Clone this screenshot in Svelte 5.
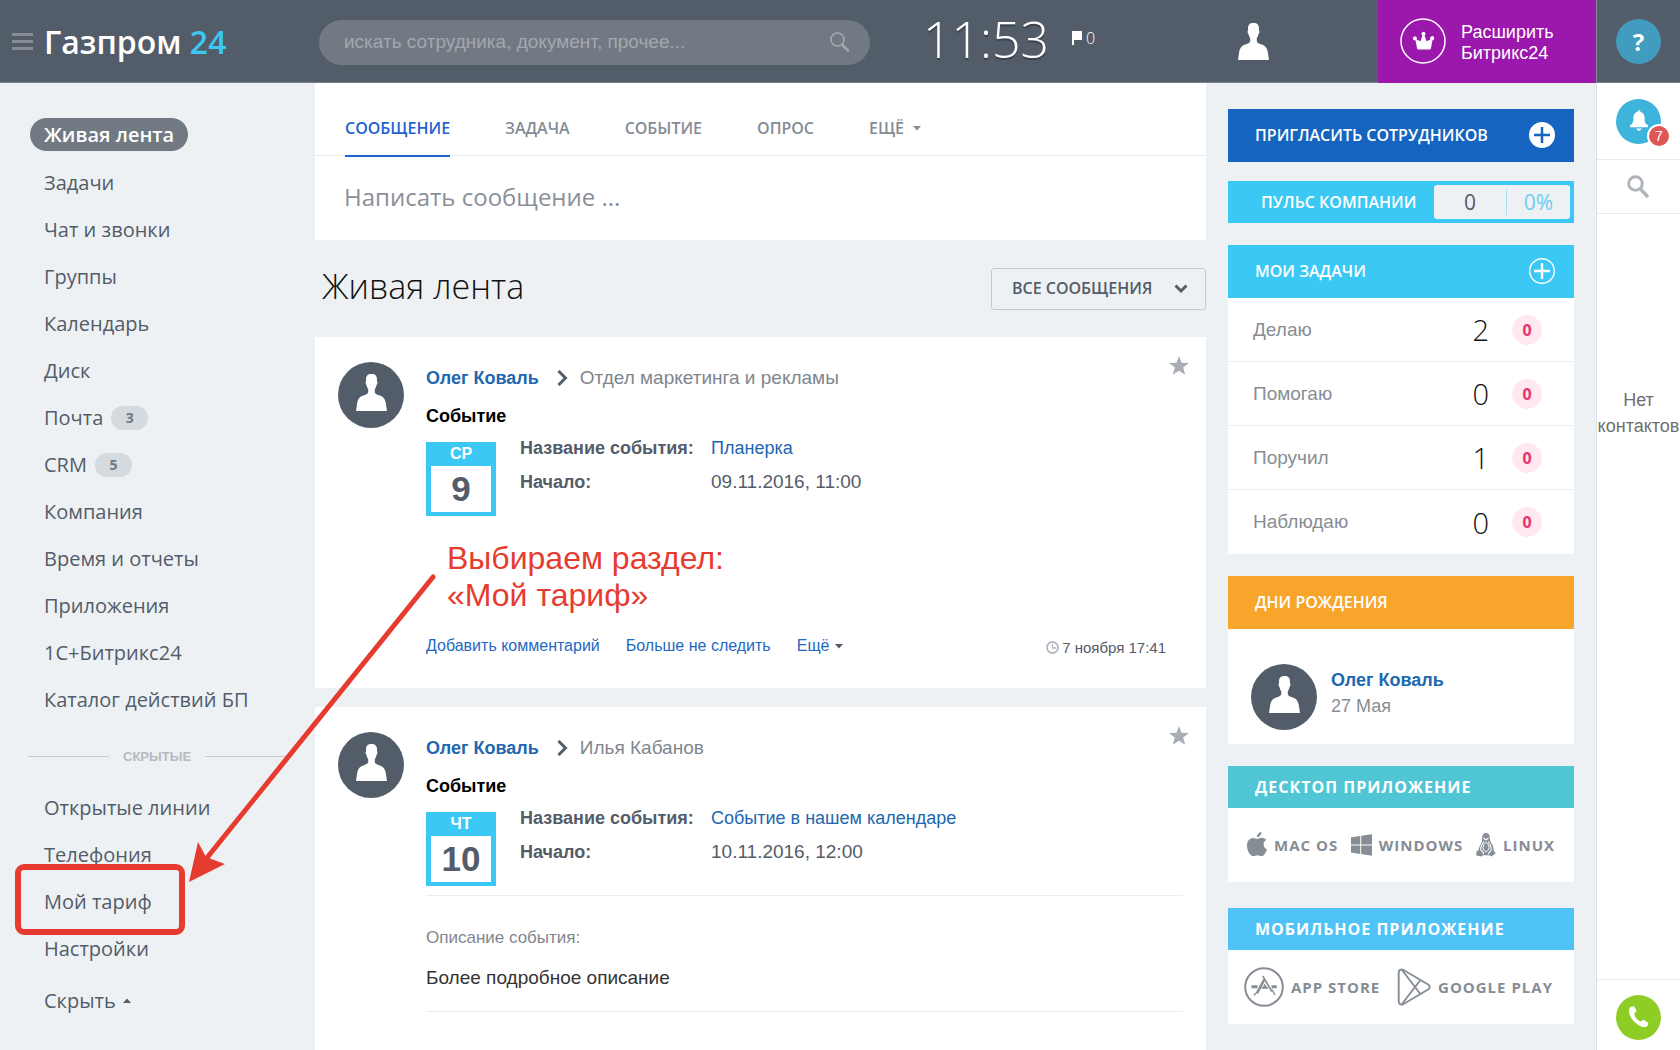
<script>
    let query = ''
    let message = ''
    let filter = 'all'

    const menu = [
        { title: 'Живая лента', active: true },
        { title: 'Задачи' },
        { title: 'Чат и звонки' },
        { title: 'Группы' },
        { title: 'Календарь' },
        { title: 'Диск' },
        { title: 'Почта', count: 3 },
        { title: 'CRM', count: 5 },
        { title: 'Компания' },
        { title: 'Время и отчеты' },
        { title: 'Приложения' },
        { title: '1С+Битрикс24' },
        { title: 'Каталог действий БП' }
    ]

    const hiddenMenu = ['Открытые линии', 'Телефония', 'Мой тариф', 'Настройки']

    const tabs = ['Сообщение', 'Задача', 'Событие', 'Опрос']

    const posts = [
        {
            author: 'Олег Коваль',
            target: 'Отдел маркетинга и рекламы',
            weekday: 'СР',
            day: 9,
            name: 'Планерка',
            start: '09.11.2016, 11:00',
            time: '7 ноября 17:41'
        },
        {
            author: 'Олег Коваль',
            target: 'Илья Кабанов',
            weekday: 'ЧТ',
            day: 10,
            name: 'Событие в нашем календаре',
            start: '10.11.2016, 12:00',
            desc: 'Более подробное описание'
        }
    ]

    const tasks = [
        { title: 'Делаю', total: 2, late: 0 },
        { title: 'Помогаю', total: 0, late: 0 },
        { title: 'Поручил', total: 1, late: 0 },
        { title: 'Наблюдаю', total: 0, late: 0 }
    ]
</script>

{#snippet person()}
    <svg class="person" width="31" height="37" viewBox="0 0 32 38" aria-hidden="true">
        <path fill="#fff" d="M16 0c-4 0-6 2-5.600 6.500.100 1-.700 1.200-.500 2.800.200 1.500.800 2 1.100 2.400.300 2 1 3 1.600 3.700v3c0 1.600-1.700 2.400-5 3.600C3.200 23.600 2 26 1.200 30L0 38h32l-1.200-8c-.800-4-2-6.400-6.400-8-3.300-1.200-5-2-5-3.600v-3c.600-.700 1.300-1.700 1.600-3.700.300-.400.900-.900 1.100-2.400.200-1.600-.600-1.800-.500-2.800C22 2 20 0 16 0z"/>
    </svg>
{/snippet}

{#snippet caret()}
    <svg class="caret" width="8" height="5" viewBox="0 0 8 5" aria-hidden="true"><path fill="currentColor" d="M0 0h8L4 4.500z"/></svg>
{/snippet}

<div class="page">
    <header class="top">
        <div class="brand">
            <button class="burger" aria-label="Меню"><span></span><span></span><span></span></button>
            <a href="#home" class="logo">Газпром <b>24</b></a>
        </div>
        <div class="search">
            <input type="text" bind:value={query} aria-label="Поиск" placeholder="искать сотрудника, документ, прочее...">
            <button aria-label="Найти">
                <svg width="20" height="20" viewBox="0 0 20 20" fill="none" stroke="#a3a8af">
                    <circle cx="7.500" cy="7.500" r="6.500" stroke-width="1.600"/>
                    <path d="M12.500 13l5.500 5.500" stroke-width="2.600" stroke-linecap="round"/>
                </svg>
            </button>
        </div>
        <time class="clock">11:53</time>
        <div class="flag">
            <svg width="10" height="14" viewBox="0 0 10 14"><path fill="#fff" d="M0 0h10v9H2v5H0z"/></svg>
            <span>0</span>
        </div>
        <button class="user" aria-label="Профиль">{@render person()}</button>
        <a href="#upgrade" class="upgrade">
            <svg width="46" height="46" viewBox="0 0 46 46" fill="none">
                <circle cx="23" cy="23" r="22" stroke="#fff" stroke-width="1.500"/>
                <path fill="#fff" d="M17 30 15.500 22.200a2 2 0 1 1 1.300-2.400q.200.900-.300 1.600l4 1.800 1.900-5.600a2 2 0 1 1 2.200 0l1.900 5.600 4-1.800a2 2 0 1 1 2 .800L31 30q-.200 1.500-1.500 1.500h-11q-1.300 0-1.500-1.500z"/>
            </svg>
            <span>Расширить<br>Битрикс24</span>
        </a>
        <div class="help"><button>?</button></div>
    </header>

    <div class="body">
        <nav class="menu">
            <ul class="main-menu">
                {#each menu as item}
                    <li>
                        <a href="#menu" class:active={item.active}>{item.title}</a>
                        {#if item.count}<span class="count">{item.count}</span>{/if}
                    </li>
                {/each}
            </ul>
            <div class="divider"><span>СКРЫТЫЕ</span></div>
            <ul>
                {#each hiddenMenu as title}
                    <li><a href="#menu">{title}</a></li>
                {/each}
            </ul>
            <button class="hide">Скрыть <i>{@render caret()}</i></button>
        </nav>

        <main>
            <section class="composer">
                <div class="tabs">
                    {#each tabs as tab, i}
                        <button class:current={i === 0}>{tab}</button>
                    {/each}
                    <button>Ещё {@render caret()}</button>
                </div>
                <input type="text" bind:value={message} aria-label="Сообщение" placeholder="Написать сообщение ...">
            </section>

            <div class="feed-head">
                <h1>Живая лента</h1>
                <div class="filter">
                    <select bind:value={filter} aria-label="Фильтр ленты">
                        <option value="all">ВСЕ СООБЩЕНИЯ</option>
                    </select>
                    <svg width="14" height="10" viewBox="0 0 14 10" fill="none"><path d="M1.500 1.500 7 7l5.500-5.500" stroke="#535c69" stroke-width="3"/></svg>
                </div>
            </div>

            {#each posts as post}
                <article class="post">
                    <div class="avatar">{@render person()}</div>
                    <div class="post-body">
                        <div class="post-head">
                            <a href="#user">{post.author}</a>
                            <svg width="11" height="16" viewBox="0 0 11 16" fill="none"><path d="M1.500 1 8.500 8l-7 7" stroke="#535c69" stroke-width="3"/></svg>
                            <span>{post.target}</span>
                        </div>
                        <h2>Событие</h2>
                        <div class="event">
                            <div class="date">
                                <span>{post.weekday}</span>
                                <b>{post.day}</b>
                            </div>
                            <dl>
                                <dt>Название события:</dt>
                                <dd><a href="#event">{post.name}</a></dd>
                                <dt>Начало:</dt>
                                <dd>{post.start}</dd>
                            </dl>
                        </div>
                        {#if post.desc}
                            <div class="desc">
                                <h3>Описание события:</h3>
                                <p>{post.desc}</p>
                            </div>
                        {/if}
                        {#if post.time}
                            <footer>
                                <button>Добавить комментарий</button>
                                <button>Больше не следить</button>
                                <button>Ещё {@render caret()}</button>
                                <time>
                                    <svg width="13" height="13" viewBox="0 0 13 13" fill="none" stroke="#b3b8c0"><circle cx="6.500" cy="6.500" r="5.500" stroke-width="1.800"/><path d="M6.500 3v4H10" stroke-width="1.300"/></svg>
                                    {post.time}
                                </time>
                            </footer>
                        {/if}
                    </div>
                    <button class="star" aria-label="В избранное">
                        <svg width="20" height="19" viewBox="0 0 20 19"><path fill="#a9adb4" d="M10 0l2.600 6.700 7.400.300-5.800 4.500 2 7.300L10 14.700l-6.200 4.100 2-7.300L0 7l7.400-.300z"/></svg>
                    </button>
                </article>
            {/each}
        </main>

        <aside class="widgets">
            <button class="bar invite">
                Пригласить сотрудников
                <svg width="26" height="26" viewBox="0 0 26 26"><circle cx="13" cy="13" r="13" fill="#fff"/><path d="M13 5v16M5 13h16" stroke="#1565c0" stroke-width="2.500"/></svg>
            </button>

            <section class="pulse">
                <h4>Пульс компании</h4>
                <div><span>0</span><span>0%</span></div>
            </section>

            <section class="card tasks">
                <header class="bar">
                    Мои задачи
                    <button aria-label="Добавить задачу">
                        <svg width="26" height="26" viewBox="0 0 26 26" fill="none" stroke="#fff"><circle cx="13" cy="13" r="12.300" stroke-width="1.400"/><path d="M13 5v16M5 13h16" stroke-width="2.400"/></svg>
                    </button>
                </header>
                <ul>
                    {#each tasks as task}
                        <li><a href="#tasks">{task.title}</a><b>{task.total}</b><span>{task.late}</span></li>
                    {/each}
                </ul>
            </section>

            <section class="card birthdays">
                <header class="bar">Дни рождения</header>
                <div class="birthday">
                    <div class="avatar">{@render person()}</div>
                    <p><a href="#user">Олег Коваль</a><br>27 Мая</p>
                </div>
            </section>

            <section class="card apps desktop">
                <header class="bar">Десктоп приложение</header>
                <div class="links">
                    <a href="#mac">
                        <svg width="20" height="26" viewBox="0 0 20 26"><path fill="#868d95" d="M14.500 0c.200 2.600-2 5.200-4.600 5.300C9.600 2.900 12 .300 14.500 0zM10.200 7c1 0 2.400-1.400 4.800-1.200 1.800.100 3.300.900 4.200 2.200-3.900 2.500-3.200 7.700.800 9.200-1.200 3.500-3.200 7-5.500 7-1.500 0-2.200-.900-4-.900s-2.500.900-4 .9C3.300 24.300 0 19 0 13.700 0 8.800 2.900 6 6 6c1.900 0 3.100 1 4.200 1z"/></svg>
                        MAC OS
                    </a>
                    <a href="#windows">
                        <svg width="21" height="22" viewBox="0 0 21 22"><path fill="#868d95" d="M0 3.200 9.200 2v8.400H0zM10.200 1.800 21 .200v10.200H10.200zM0 11.500h9.200v8.400L0 18.600zM10.200 11.500H21v10.200l-10.800-1.600z"/></svg>
                        WINDOWS
                    </a>
                    <a href="#linux">
                        <svg width="20" height="24" viewBox="0 0 20 24">
                            <path fill="#868d95" d="M10 0c2.600 0 3.800 1.800 3.800 4.500 0 2.500.500 3.700 2 6.200 1.400 2.300 2.200 4.600 1.700 6.800l2.300 2.800-4.300 3.200-2.300-1.300H6.800l-1.500 1.300L.300 22.500l.200-4.200 2-1c0-3 2.700-6.300 3.300-8.600.400-1.500.400-2.700.400-4.200C6.200 1.800 7.400 0 10 0z"/>
                            <path fill="none" stroke="#fff" stroke-width="1.100" d="M7.500 5 10 7l2.500-2M7.800 8.500c-2.200 3.200-3.500 5.700-3 8.200L8 20.800M12.200 8.500c2.200 3.200 3.500 5.700 3 8.200L12.300 21"/>
                            <path fill="none" stroke="#fff" stroke-width="1" d="M10 9c2 2 3 3.700 3 5.500s-1.500 3.500-3 4.500c-1.500-1-3-2.700-3-4.500S8 11 10 9z"/>
                        </svg>
                        LINUX
                    </a>
                </div>
            </section>

            <section class="card apps mobile">
                <header class="bar">Мобильное приложение</header>
                <div class="links">
                    <a href="#appstore">
                        <svg width="40" height="40" viewBox="0 0 40 40" fill="none" stroke="#868d95">
                            <circle cx="20" cy="20" r="18.800" stroke-width="2"/>
                            <path d="M7.500 19.800h6M27.500 19.800h5.300" stroke-width="3"/>
                            <path d="M20.300 12.500 12.800 26.500" stroke-width="2.600"/>
                            <path d="M18.800 9l9 15.500" stroke-width="1.600"/>
                            <path d="M28 22.500l3 5.500M11.500 26l-1.200 2.500M17.500 21h6.500" stroke-width="1.500"/>
                            <path fill="#868d95" stroke="none" d="M20.500 16.500 23.500 21h-5z"/>
                        </svg>
                        APP STORE
                    </a>
                    <a href="#googleplay">
                        <svg width="34" height="38" viewBox="0 0 34 38" fill="none" stroke="#868d95" stroke-width="1.900" stroke-linejoin="round">
                            <path d="M6.500 2 31.500 16.800q2.500 2.200 0 4.400L6.500 36q-4.800 1.800-4.800-3V5q0-4.800 4.800-3z"/>
                            <path d="M5 2 23 25.500M23 12.500 5 36"/>
                        </svg>
                        GOOGLE PLAY
                    </a>
                </div>
            </section>
        </aside>

        <aside class="rail">
            <div class="notify">
                <button aria-label="Уведомления">
                    <svg width="18" height="22" viewBox="0 0 20 24"><path fill="#fff" d="M10 0c.900 0 1.500.600 1.500 1.600 3 .700 4.700 3.200 4.700 6.400 0 5 .600 6.500 2.800 8 .700.500 1 1 1 1.500v1.500H0v-1.500c0-.500.300-1 1-1.500 2.200-1.500 2.800-3 2.800-8 0-3.200 1.700-5.700 4.700-6.400C8.500.600 9.100 0 10 0zM7.200 20.300h5.600c-.300 1.600-1.400 2.400-2.800 2.400s-2.500-.800-2.800-2.400z"/></svg>
                    <span>7</span>
                </button>
            </div>
            <button class="find" aria-label="Поиск контакта">
                <svg width="23" height="24" viewBox="0 0 23 24" fill="none" stroke="#b0b5bb"><circle cx="8.500" cy="8.500" r="6.800" stroke-width="3"/><path d="M13.500 14l7.500 8" stroke-width="3.400"/></svg>
            </button>
            <p>Нет контактов</p>
            <div class="call">
                <button aria-label="Позвонить">
                    <svg width="20" height="22" viewBox="0 0 20 22"><path fill="#fff" d="M2.200.800 4 .200q1-.300 1.500.600l1.700 3.400q.400 1-.300 1.700L5.300 7.500c.500 3.800 2.800 6.600 6.500 8l2-1.300q.900-.600 1.700.100l3.400 2.400q.800.700.300 1.600l-1 1.700c-1.500 1.800-5.500 1.300-9.200-1.200C3.500 15.200.500 10.200 0 5.500-.100 3.200.500 1.500 2.200.800z"/></svg>
                </button>
            </div>
        </aside>
    </div>

    <div class="hint">
        <svg width="250" height="314" viewBox="0 0 250 314">
            <path d="M246 8 19 290" stroke="#e63c30" stroke-width="5" stroke-linecap="round"/>
            <path fill="#e63c30" d="M2 313 11 273l8 15 19 7z"/>
        </svg>
        <p>Выбираем раздел:<br>«Мой тариф»</p>
        <div class="frame"></div>
    </div>
</div>

<style>
    :global(body) {
        margin: 0;
    }

    .page {
        position: relative;
        display: flex;
        flex-direction: column;
        min-height: 100vh;
        overflow: hidden;
        background: #edf1f4;
        color: #535c69;
        font-family: 'Liberation Sans', Arial, sans-serif;
        font-size: 18px;
    }

    .page *,
    .page {
        box-sizing: border-box;
    }

    button,
    input,
    select {
        border: none;
        background: none;
        padding: 0;
        font: inherit;
        color: inherit;
    }

    button {
        cursor: pointer;
    }

    a {
        color: #2067b0;
        text-decoration: none;
    }

    ul {
        list-style: none;
        margin: 0;
        padding: 0;
    }

    svg {
        display: block;
        flex: none;
    }

    .top {
        display: flex;
        align-items: center;
        height: 83px;
        background: #535c69;
        border-bottom: 1px solid #7b838e;
        color: #fff;
    }

    .brand {
        display: flex;
        align-items: center;
        gap: 11px;
        width: 319px;
        padding-left: 12px;
    }

    .burger {
        display: grid;
        gap: 4px;
    }

    .burger span {
        width: 21px;
        height: 3px;
        background: #868d96;
    }

    .logo {
        color: #fff;
        font: 600 32px 'Open Sans', sans-serif;
    }

    .logo b {
        font-weight: 600;
        color: #3bc8f5;
    }

    .search {
        display: flex;
        align-items: center;
        width: 551px;
        height: 45px;
        margin-top: 2px;
        padding: 0 20px 0 25px;
        border-radius: 23px;
        background: #717983;
        font-size: 19px;
    }

    .search input {
        flex: 1;
        outline: none;
    }

    .search input::placeholder {
        color: #a3a8af;
        opacity: 1;
    }

    .clock {
        margin-left: 53px;
        padding-bottom: 4px;
        font: 300 50px/78px 'Open Sans', sans-serif;
        text-shadow: 0 2px 1px rgba(0, 0, 0, 0.3);
    }

    .flag {
        display: flex;
        align-items: center;
        gap: 4px;
        margin-left: 23px;
        padding-bottom: 7px;
        font: 300 16px/20px 'Open Sans', sans-serif;
    }

    .user {
        margin: 0 109px 0 auto;
    }

    .upgrade {
        display: flex;
        align-items: center;
        gap: 15px;
        width: 218px;
        height: 83px;
        padding-left: 22px;
        background: #9c17ac;
        color: #fff;
        line-height: 21px;
    }

    .upgrade span {
        padding-top: 3px;
    }

    .help {
        display: grid;
        place-items: center;
        width: 84px;
        height: 83px;
        border-left: 1px solid #868d96;
    }

    .help button,
    .notify button,
    .call button {
        display: grid;
        place-items: center;
        width: 45px;
        height: 45px;
        border-radius: 50%;
        background: #429cbf;
        font: 700 24px 'Open Sans', sans-serif;
    }

    .body {
        display: flex;
        flex: 1;
    }

    .menu {
        width: 315px;
        padding: 28px 28px 0;
        font: 20px/33px 'Open Sans', sans-serif;
    }

    .menu li {
        display: flex;
        align-items: center;
        height: 47px;
        padding-left: 2px;
    }

    .main-menu li:first-child {
        margin-bottom: 1px;
    }

    .menu a {
        padding: 0 14px;
        border-radius: 17px;
        color: #535c69;
    }

    .menu a.active {
        background: #717983;
        color: #fff;
        font-weight: 600;
    }

    .count {
        width: 37px;
        margin-left: -6px;
        border-radius: 12px;
        background: #d5dade;
        font-size: 14px;
        font-weight: 700;
        line-height: 24px;
        text-align: center;
        color: #717983;
    }

    .divider {
        display: flex;
        align-items: center;
        gap: 14px;
        height: 61px;
        padding-top: 6px;
        color: #b5babf;
        font: 700 13px 'Liberation Sans', Arial, sans-serif;
    }

    .divider::before,
    .divider::after {
        content: '';
        width: 81px;
        height: 1px;
        background: #c5cbd0;
    }

    .hide {
        display: flex;
        align-items: center;
        gap: 7px;
        margin: 12px 0 0 16px;
    }

    .hide i {
        transform: rotate(180deg);
    }

    main {
        display: flex;
        flex: 1;
        flex-direction: column;
        min-width: 0;
    }

    .composer {
        background: #fff;
    }

    .tabs {
        display: flex;
        gap: 55px;
        height: 73px;
        padding: 0 30px;
        border-bottom: 1px solid #ebedee;
    }

    .tabs button {
        display: flex;
        align-items: center;
        gap: 9px;
        height: 74px;
        padding-top: 18px;
        border-bottom: 2px solid transparent;
        font: 600 16px 'Open Sans', sans-serif;
        text-transform: uppercase;
        color: #848c95;
    }

    .tabs button.current {
        border-color: #1f62d0;
        color: #1f62d0;
    }

    .composer input {
        width: 100%;
        height: 84px;
        padding: 0 29px 4px;
        outline: none;
        font: 24px 'Open Sans', sans-serif;
    }

    .composer input::placeholder {
        color: #8a9099;
        opacity: 1;
    }

    .feed-head {
        display: flex;
        align-items: center;
        justify-content: space-between;
        height: 97px;
        padding-left: 7px;
    }

    h1 {
        margin: 0;
        padding-bottom: 6px;
        font: 300 34px 'Open Sans', sans-serif;
        color: #111;
    }

    .filter {
        position: relative;
    }

    .filter select {
        appearance: none;
        width: 215px;
        height: 42px;
        padding: 0 20px 2px;
        border: 1px solid #c5cacf;
        border-radius: 3px;
        font: 600 16px 'Open Sans', sans-serif;
        color: #535c69;
    }

    .filter svg {
        position: absolute;
        top: 16px;
        right: 18px;
        pointer-events: none;
    }

    .post {
        position: relative;
        display: flex;
        gap: 22px;
        padding: 25px 23px 32px;
        background: #fff;
    }

    .post + .post {
        flex: 1;
        margin-top: 19px;
    }

    .avatar {
        display: grid;
        flex: none;
        place-items: center;
        width: 66px;
        height: 66px;
        padding-bottom: 5px;
        border-radius: 50%;
        background: #535c69;
    }

    .post-body {
        flex: 1;
    }

    .post-head {
        display: flex;
        align-items: center;
        gap: 12px;
        height: 32px;
        color: #80868e;
        font-size: 19px;
    }

    .post-head a {
        margin-right: 6px;
        font-size: 18px;
        font-weight: 700;
    }

    .post h2 {
        margin: 12px 0 15px;
        font-size: 18px;
        line-height: 21px;
        color: #000;
    }

    .event {
        display: flex;
        gap: 24px;
        height: 74px;
    }

    .date {
        display: flex;
        flex-direction: column;
        width: 70px;
        padding: 0 5px 5px;
        background: #3bc8f5;
        text-align: center;
    }

    .date span {
        color: #fff;
        font-size: 16px;
        font-weight: 700;
        line-height: 24px;
    }

    .date b {
        flex: 1;
        background: #fff;
        font-size: 35px;
        line-height: 46px;
    }

    dl {
        display: grid;
        grid-template-columns: 191px auto;
        align-content: start;
        margin: -11px 0 0;
        line-height: 34px;
    }

    dt {
        font-weight: 700;
    }

    dd {
        margin: 0;
        font-size: 19px;
    }

    dd a {
        font-size: 18px;
    }

    .desc {
        margin-top: 9px;
        border: solid #ebedee;
        border-width: 1px 0;
        padding: 32px 0 23px;
    }

    .desc h3 {
        margin: 0 0 20px;
        font-size: 17px;
        font-weight: 400;
        line-height: 20px;
        color: #80868e;
    }

    .desc p {
        margin: 0;
        font-size: 19px;
        line-height: 20px;
        color: #333;
    }

    .post footer {
        display: flex;
        align-items: center;
        gap: 26px;
        height: 20px;
        margin-top: 120px;
        padding-right: 17px;
        font-size: 16px;
    }

    .post footer button {
        display: flex;
        align-items: center;
        gap: 6px;
        color: #1f68c4;
    }

    .post footer button :global(.caret) {
        color: #535c69;
    }

    .post footer time {
        display: flex;
        align-items: center;
        gap: 3px;
        margin-left: auto;
        padding-top: 2px;
        font-size: 15px;
    }

    .star {
        position: absolute;
        top: 19px;
        right: 17px;
    }

    .widgets {
        width: 346px;
        margin: 26px 22px 26px;
    }

    .bar {
        display: flex;
        align-items: center;
        justify-content: space-between;
        width: 100%;
        height: 53px;
        padding: 0 19px 2px 27px;
        background: #3bc8f5;
        color: #fff;
        font: 600 16px 'Open Sans', sans-serif;
        text-transform: uppercase;
    }

    .invite {
        background: #1565c0;
    }

    .pulse {
        display: flex;
        align-items: center;
        justify-content: space-between;
        height: 42px;
        margin-top: 19px;
        padding: 4px 4px 4px 33px;
        background: #3bc8f5;
        color: #fff;
    }

    .pulse h4 {
        margin: 0;
        font: 600 16px 'Open Sans', sans-serif;
        text-transform: uppercase;
    }

    .pulse div {
        display: grid;
        grid-template-columns: 72px 64px;
        padding: 4px 0;
        border-radius: 3px;
        background: #edf1f4;
        color: #535c69;
        font: 21px/26px 'Open Sans', sans-serif;
        text-align: center;
    }

    .pulse span + span {
        border-left: 1px solid #a9dff2;
        color: #6acdf2;
    }

    .card {
        margin-top: 22px;
        background: #fff;
    }

    .tasks li {
        display: flex;
        align-items: center;
        height: 64px;
        padding: 0 32px 0 25px;
        border-bottom: 1px solid #ebedee;
    }

    .tasks li:last-child {
        border: none;
    }

    .tasks li a {
        flex: 1;
        color: #868d95;
        font-size: 19px;
    }

    .tasks li b {
        margin-right: 23px;
        font: 300 29px 'Open Sans', sans-serif;
        color: #111;
    }

    .tasks li span {
        width: 30px;
        border-radius: 50%;
        background: #ffe8ee;
        color: #f0306b;
        font: 700 16px/30px 'Open Sans', sans-serif;
        text-align: center;
    }

    .birthdays .bar {
        background: #f7a62b;
    }

    .birthday {
        display: flex;
        align-items: flex-start;
        gap: 14px;
        padding: 35px 23px 14px;
        color: #868d95;
    }

    .birthday p {
        margin: 3px 0 0;
        line-height: 26px;
    }

    .birthday a {
        font-weight: 700;
    }

    .apps .bar {
        height: 42px;
        padding-bottom: 0;
        background: #50c6d4;
        font-weight: 700;
        letter-spacing: 1px;
    }

    .mobile {
        margin-top: 26px;
    }

    .mobile .bar {
        background: #4fc2f8;
    }

    .links {
        display: flex;
        align-items: center;
        justify-content: space-between;
        height: 74px;
        padding: 0 19px;
    }

    .mobile .links {
        padding: 0 21px 0 16px;
    }

    .links a {
        display: flex;
        align-items: center;
        gap: 7px;
        color: #868d95;
        font: 700 15px 'Open Sans', sans-serif;
        letter-spacing: 1px;
    }

    .rail {
        display: flex;
        flex-direction: column;
        width: 84px;
        border-left: 1px solid #d5dfe8;
        background: #fff;
    }

    .notify {
        display: grid;
        place-items: center;
        height: 77px;
        border-bottom: 1px solid #e8ecef;
    }

    .notify button {
        position: relative;
        background: #3eb4dc;
    }

    .notify span {
        position: absolute;
        right: -10px;
        bottom: -4px;
        width: 24px;
        border: 2px solid #fff;
        border-radius: 50%;
        background: #e05656;
        color: #fff;
        font: 14px/20px 'Liberation Sans', Arial, sans-serif;
    }

    .find {
        display: grid;
        place-items: center;
        height: 54px;
        border-bottom: 1px solid #e8ecef;
    }

    .rail p {
        margin: 173px 0 0;
        line-height: 26px;
        text-align: center;
        color: #6f6f6f;
    }

    .call {
        display: grid;
        place-items: center;
        height: 71px;
        margin-top: auto;
        padding-top: 4px;
        border-top: 1px solid #e8ecef;
    }

    .call button {
        background: #8ecd26;
    }

    .hint {
        position: absolute;
        top: 0;
        left: 0;
        pointer-events: none;
    }

    .hint svg {
        position: absolute;
        top: 569px;
        left: 187px;
    }

    .hint p {
        position: absolute;
        top: 540px;
        left: 447px;
        margin: 0;
        font-size: 32px;
        line-height: 37px;
        white-space: nowrap;
        color: #e63c30;
    }

    .frame {
        position: absolute;
        top: 864px;
        left: 15px;
        width: 170px;
        height: 71px;
        border: 6px solid #e63c30;
        border-radius: 9px;
    }
</style>
